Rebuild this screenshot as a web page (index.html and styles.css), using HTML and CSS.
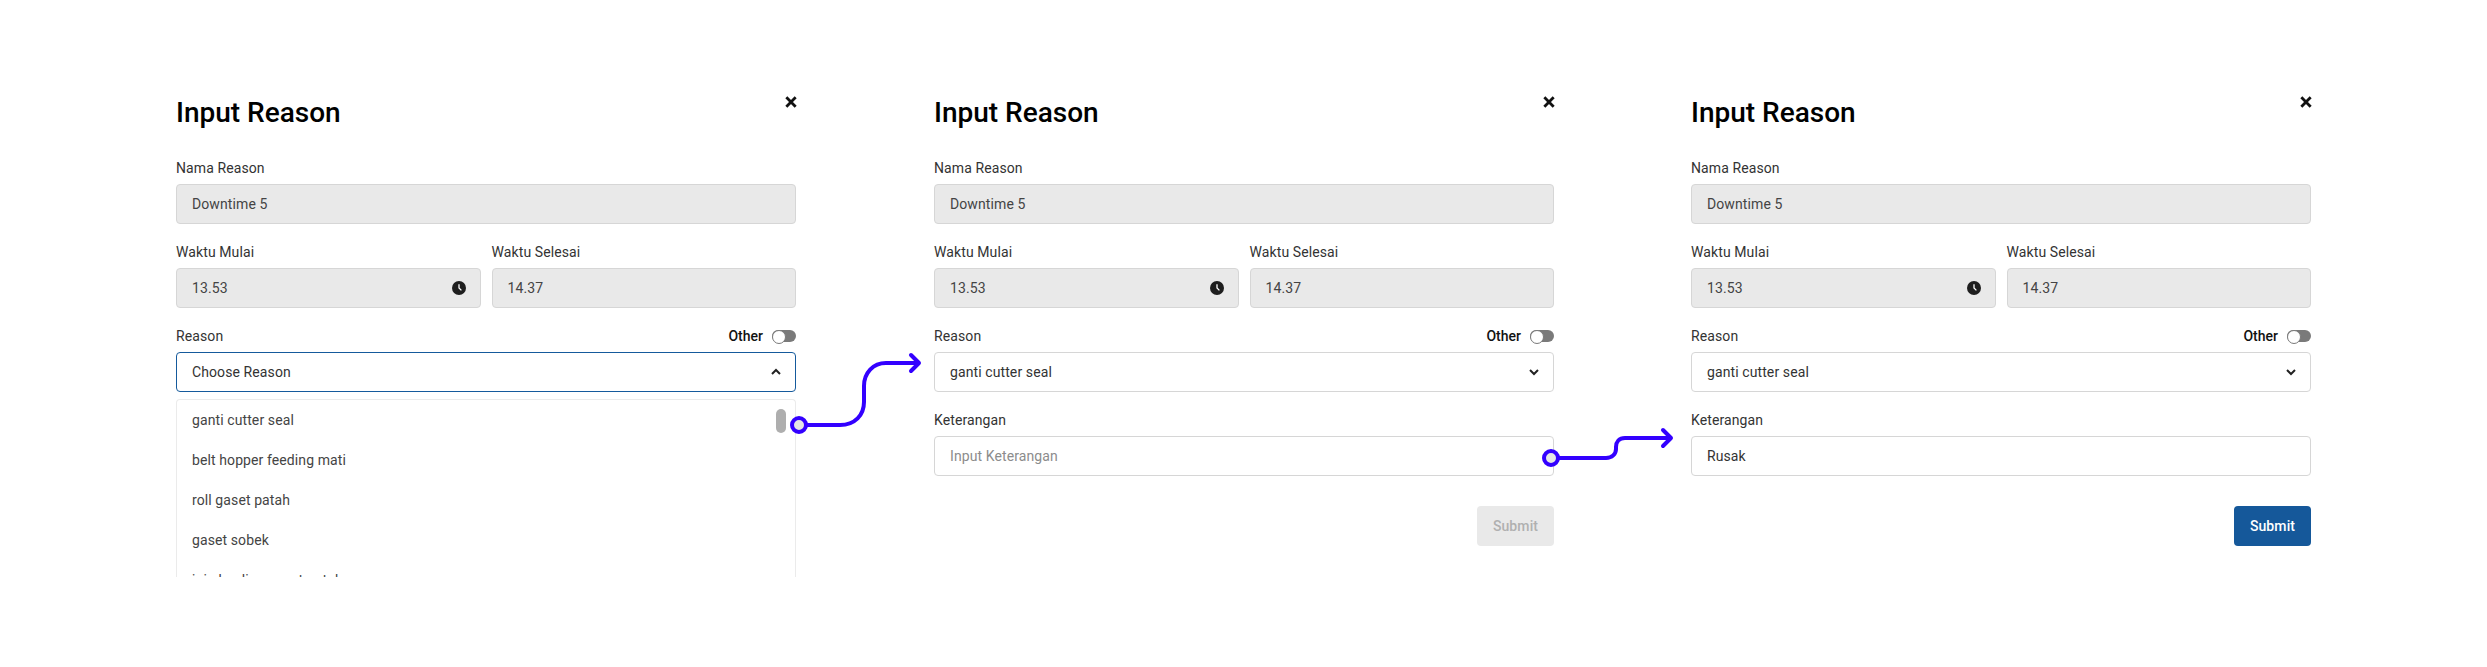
FILE: index.html
```html
<!DOCTYPE html>
<html lang="id">
<head>
<meta charset="utf-8">
<title>Input Reason</title>
<link rel="stylesheet" href="styles.css">
</head>
<body>
<main class="page">
  <section class="panel">
    <header class="head"><h1 class="title">Input Reason</h1><svg class="close" viewBox="0 0 12 12"><path d="M2 2l8 8M10 2l-8 8"/></svg></header>
    <div class="label">Nama Reason</div>
    <div class="field disabled">Downtime 5</div>
    <div class="times">
      <div class="col"><div class="label">Waktu Mulai</div><div class="field disabled">13.53<svg class="clock" viewBox="0 0 14 14"><circle cx="7" cy="7" r="7"/><path d="M7 3.2V7l2.4 2.4"/></svg></div></div>
      <div class="col"><div class="label">Waktu Selesai</div><div class="field disabled">14.37</div></div>
    </div>
    <div class="label-row"><div class="label">Reason</div><div class="other">Other<span class="toggle"></span></div></div>
    <div class="field focus">Choose Reason<svg class="chev" viewBox="0 0 12 8"><path d="M2 6l4-4 4 4"/></svg></div>
    <div class="menu">
      <div class="item">ganti cutter seal</div>
      <div class="item">belt hopper feeding mati</div>
      <div class="item">roll gaset patah</div>
      <div class="item">gaset sobek</div>
      <div class="item">join kopling gaset patah</div>
      <span class="thumb"></span>
    </div>
  </section>
  <section class="panel">
    <header class="head"><h1 class="title">Input Reason</h1><svg class="close" viewBox="0 0 12 12"><path d="M2 2l8 8M10 2l-8 8"/></svg></header>
    <div class="label">Nama Reason</div>
    <div class="field disabled">Downtime 5</div>
    <div class="times">
      <div class="col"><div class="label">Waktu Mulai</div><div class="field disabled">13.53<svg class="clock" viewBox="0 0 14 14"><circle cx="7" cy="7" r="7"/><path d="M7 3.2V7l2.4 2.4"/></svg></div></div>
      <div class="col"><div class="label">Waktu Selesai</div><div class="field disabled">14.37</div></div>
    </div>
    <div class="label-row"><div class="label">Reason</div><div class="other">Other<span class="toggle"></span></div></div>
    <div class="field">ganti cutter seal<svg class="chev" viewBox="0 0 12 8"><path d="M2 2l4 4 4-4"/></svg></div>
    <div class="label gap">Keterangan</div>
    <div class="field placeholder">Input Keterangan</div>
    <div class="actions"><div class="btn off">Submit</div></div>
  </section>
  <section class="panel">
    <header class="head"><h1 class="title">Input Reason</h1><svg class="close" viewBox="0 0 12 12"><path d="M2 2l8 8M10 2l-8 8"/></svg></header>
    <div class="label">Nama Reason</div>
    <div class="field disabled">Downtime 5</div>
    <div class="times">
      <div class="col"><div class="label">Waktu Mulai</div><div class="field disabled">13.53<svg class="clock" viewBox="0 0 14 14"><circle cx="7" cy="7" r="7"/><path d="M7 3.2V7l2.4 2.4"/></svg></div></div>
      <div class="col"><div class="label">Waktu Selesai</div><div class="field disabled">14.37</div></div>
    </div>
    <div class="label-row"><div class="label">Reason</div><div class="other">Other<span class="toggle"></span></div></div>
    <div class="field">ganti cutter seal<svg class="chev" viewBox="0 0 12 8"><path d="M2 2l4 4 4-4"/></svg></div>
    <div class="label gap">Keterangan</div>
    <div class="field">Rusak</div>
    <div class="actions"><div class="btn on">Submit</div></div>
  </section>
  <svg class="links" viewBox="0 0 2487 667">
    <path d="M807 425H840C855 425 864 415 864 402V386C864 373 873 363 886 363H919M911 355l8 8-8 8"/>
    <circle cx="799" cy="425" r="7"/>
    <path d="M1559 458H1606C1612 458 1616 454 1616 449V447C1616 442 1619 438 1625 438H1671M1663 430l8 8-8 8"/>
    <circle cx="1551" cy="458" r="7"/>
  </svg>
</main>
</body>
</html>
```
FILE: styles.css
```css
* { box-sizing: border-box; }
html, body { margin: 0; background: #fff; }
body { font-family: Roboto, sans-serif; font-size: 14px; color: #333; letter-spacing: 0.1px; }
.page { position: relative; width: 2487px; height: 667px; padding: 96px 0 0 176px; display: grid; grid-template-columns: 758px 757px 620px; align-items: start; overflow: hidden; }
.panel { width: 620px; }
.head { display: flex; justify-content: space-between; align-items: flex-start; height: 34px; margin-bottom: 30px; }
.title { margin: 0; font-size: 28px; line-height: 34px; font-weight: 500; color: #000; letter-spacing: 0; }
.close { width: 14px; height: 14px; fill: none; stroke: #111; stroke-width: 2.4; margin-top: -1px; margin-right: -2px; }
.label { font-size: 14px; line-height: 16px; color: #333; margin-bottom: 8px; }
.label.gap { margin-top: 20px; }
.field { height: 40px; border: 1px solid #d6d6d6; border-radius: 4px; padding: 0 15px; display: flex; align-items: center; justify-content: space-between; color: #333; background: #fff; }
.field.disabled { background: #e9e9e9; color: #444; }
.field.focus { border-color: #155a9c; }
.field.placeholder { color: #8c8c8c; }
.times { display: grid; grid-template-columns: 1fr 1fr; column-gap: 11px; margin-top: 20px; margin-bottom: 20px; }
.label-row { display: flex; justify-content: space-between; align-items: flex-start; margin-bottom: 8px; }
.label-row .label { margin: 0; }
.other { display: flex; align-items: center; gap: 9px; font-weight: 500; line-height: 16px; color: #111; letter-spacing: 0; }
.toggle { position: relative; display: block; width: 24px; height: 12px; border-radius: 6px; background: #7a7a7a; }
.toggle::after { content: ""; position: absolute; left: 0; top: 0; width: 12px; height: 12px; border-radius: 50%; background: #fff; border: 1px solid #7a7a7a; }
.clock { width: 14px; height: 14px; margin-right: -1px; fill: #1e1e1e; stroke: none; }
.clock path { fill: none; stroke: #fff; stroke-width: 1.3; }
.chev { width: 12px; height: 8px; margin-right: -2px; fill: none; stroke: #222; stroke-width: 2; }
.menu { position: relative; height: 178px; margin-top: 7px; border: 1px solid #ebebeb; border-bottom: 0; border-radius: 4px 4px 0 0; overflow: hidden; color: #444; }
.item { height: 40px; padding: 0 15px; display: flex; align-items: center; }
.thumb { position: absolute; top: 9px; right: 9px; width: 10px; height: 24px; border-radius: 5px; background: #aeaeae; }
.actions { display: flex; justify-content: flex-end; margin-top: 30px; }
.btn { width: 77px; height: 40px; border-radius: 4px; display: flex; align-items: center; justify-content: center; font-weight: 500; }
.btn.off { background: #e9e9e9; color: #b0b0b0; }
.btn.on { background: #15589a; color: #fff; }
.links { position: absolute; left: 0; top: 0; width: 2487px; height: 667px; fill: none; stroke: #3300ff; stroke-width: 4; stroke-linecap: round; stroke-linejoin: round; pointer-events: none; }
.links circle { fill: #e6e6e6; }
```
